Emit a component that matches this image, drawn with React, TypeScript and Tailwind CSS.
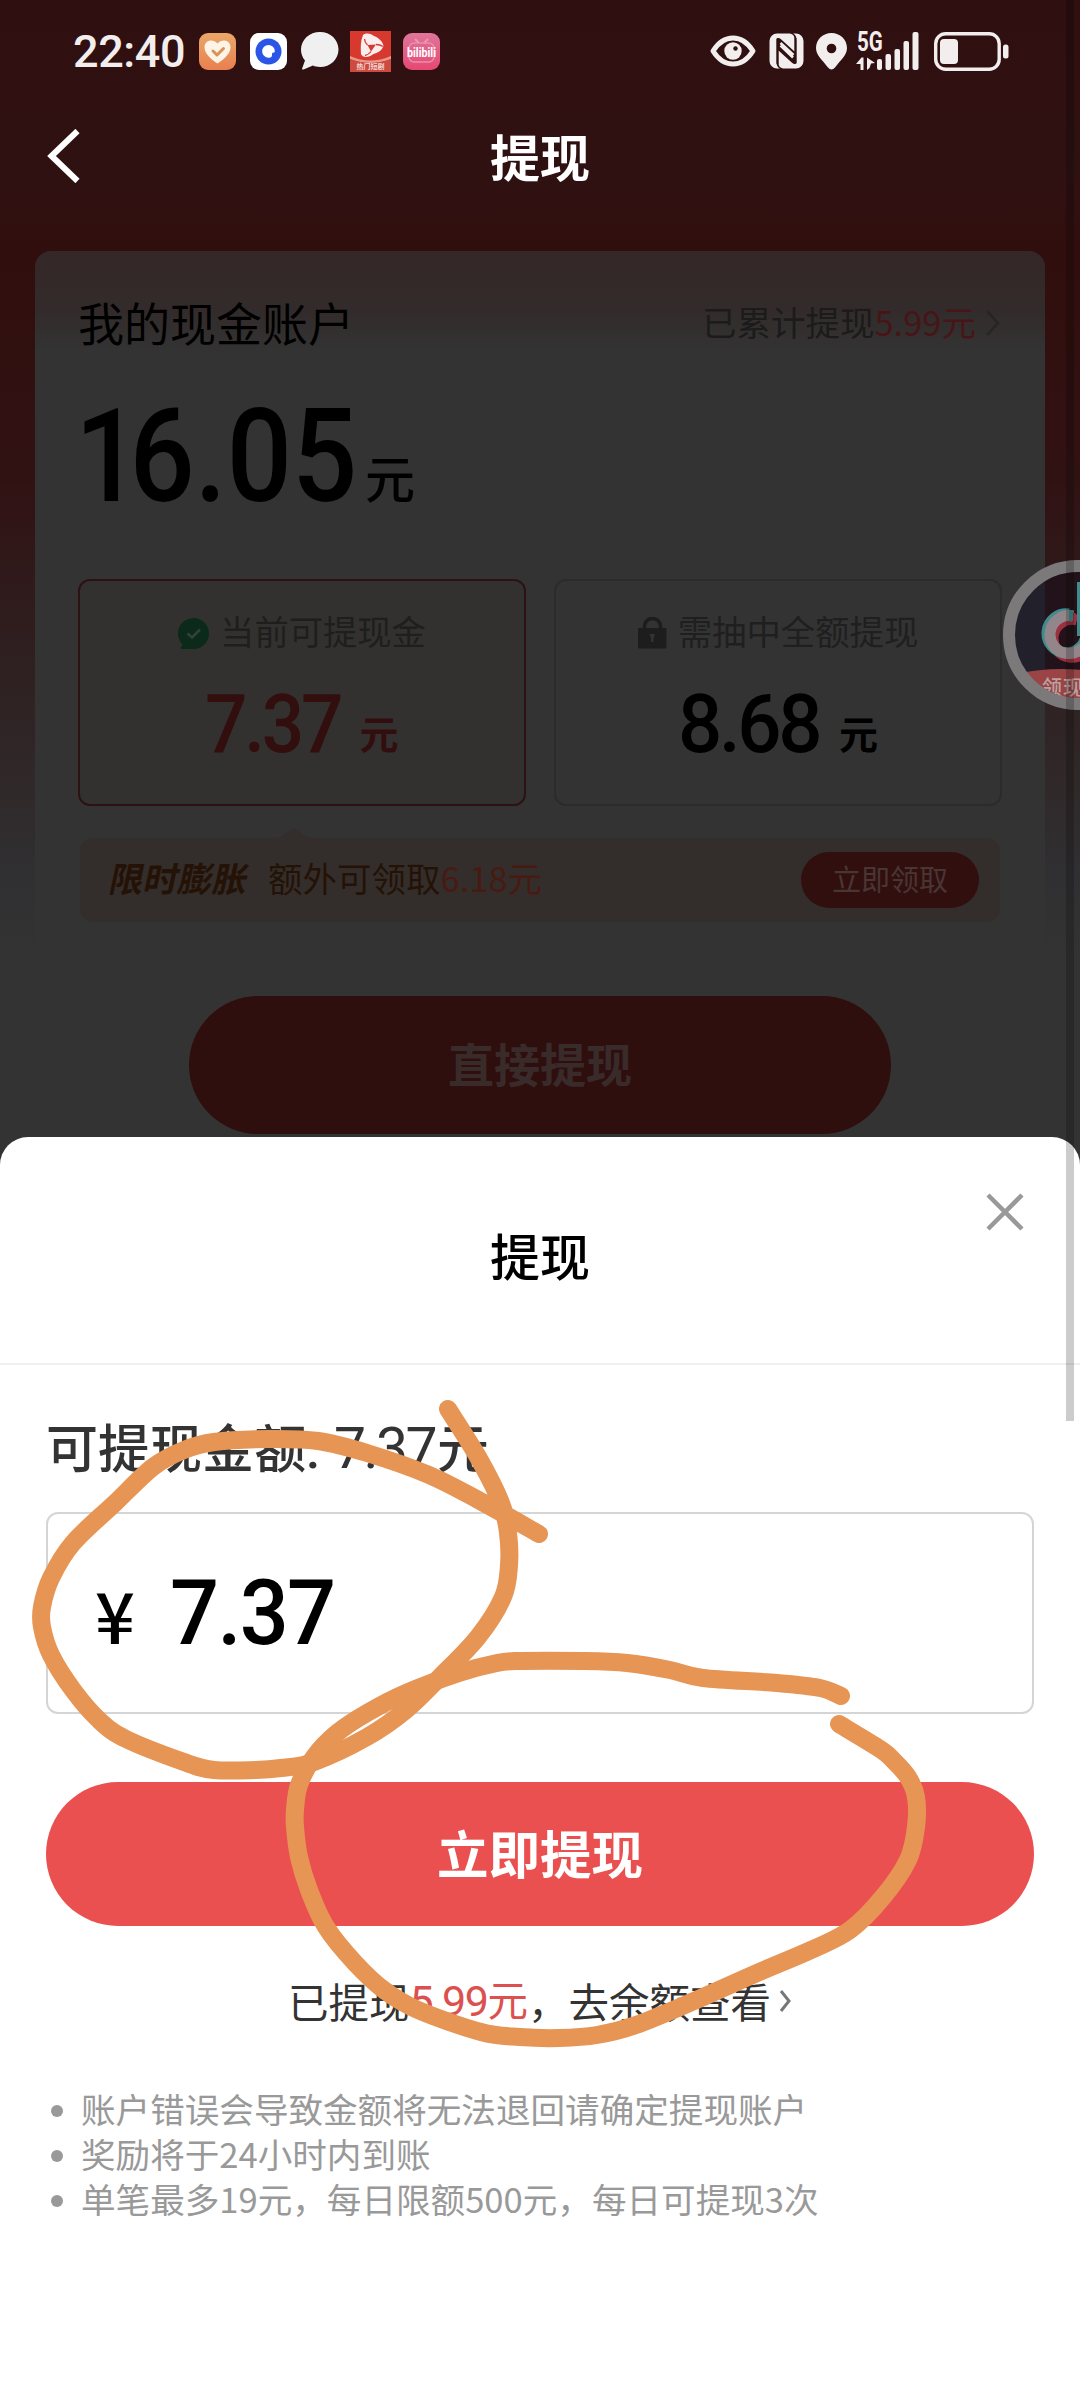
import React from "react";

type Pt = [number, number];

const amountLoop: Pt[] = [
  [448, 1409], [478, 1457], [501, 1503], [508, 1533], [509, 1565], [503, 1597], [478, 1637], [440, 1677],
  [406, 1710], [367, 1737], [314, 1762], [281, 1768], [256, 1770], [214, 1770], [184, 1762], [126, 1739],
  [99, 1720], [73, 1690], [51, 1655], [42, 1627], [42, 1607], [51, 1578], [73, 1543], [115, 1503],
  [153, 1467], [184, 1450], [214, 1442], [268, 1439], [318, 1441], [367, 1453], [429, 1475], [482, 1502], [539, 1534],
];

const buttonLoop: Pt[] = [
  [841, 1696], [820, 1688], [777, 1683], [703, 1678], [670, 1670], [627, 1663], [583, 1661], [520, 1661],
  [497, 1663], [459, 1673], [406, 1693], [367, 1713], [337, 1733], [314, 1757], [299, 1785], [295, 1810],
  [295, 1827], [299, 1857], [309, 1890], [326, 1927], [355, 1963], [384, 1990], [418, 2010], [481, 2032],
  [520, 2037], [559, 2038], [597, 2035], [636, 2025], [694, 2001], [757, 1973], [811, 1950], [850, 1930],
  [883, 1897], [908, 1860], [916, 1827], [916, 1797], [908, 1777], [893, 1760], [880, 1749], [839, 1724],
];

// Catmull-Rom spline through the pen samples
function smooth(p: Pt[]) {
  let d = `M${p[0][0]} ${p[0][1]}`;
  for (let i = 0; i < p.length - 1; i++) {
    const a = p[Math.max(0, i - 1)];
    const b = p[i];
    const c = p[i + 1];
    const e = p[Math.min(p.length - 1, i + 2)];
    d += `C${b[0] + (c[0] - a[0]) / 6} ${b[1] + (c[1] - a[1]) / 6} ${c[0] - (e[0] - b[0]) / 6} ${c[1] - (e[1] - b[1]) / 6} ${c[0]} ${c[1]}`;
  }
  return d;
}

const num = "font-['Roboto','Noto_Sans_CJK_SC',sans-serif] font-medium inline-block origin-left";

function StatusBar() {
  return (
    <div className="flex h-[102px] items-center pl-[73px] pr-[71px] text-[#f3eeee]">
      <span className="w-[126px] font-['Roboto',sans-serif] text-[45px] font-medium leading-none tracking-[-0.4px]">22:40</span>
      <svg className="h-[37px] w-[37px]" viewBox="0 0 37 37">
        <defs>
          <linearGradient id="hb" x1="0" y1="0" x2="0" y2="1">
            <stop offset="0" stopColor="#eaa768" />
            <stop offset="1" stopColor="#e8804f" />
          </linearGradient>
        </defs>
        <rect width="37" height="37" rx="9" fill="url(#hb)" />
        <path d="M18.5 30.500C14 28 5.500 21 5.500 14.500C5.500 7 14 5.500 18.500 10.500C23 5.500 31.500 7 31.500 14.500C31.500 21 23 28 18.500 30.500Z" fill="#fdf3e6" />
        <path d="M14 18l4 4 6.500-6.500" fill="none" stroke="#d99357" strokeWidth="3" strokeLinecap="round" strokeLinejoin="round" />
      </svg>
      <svg className="ml-[14px] h-[37px] w-[37px]" viewBox="0 0 37 37">
        <rect width="37" height="37" rx="9" fill="#fff" />
        <circle cx="18.500" cy="18.500" r="13" fill="#2b55e6" />
        <path d="M18.500 12a6.300 6.300 0 0 1 6.300 6.300c0 2-2.300 .6-2.700 2.400-.3 1.600 .6 4-3.600 4a6.350 6.350 0 0 1 0-12.700z" fill="#fff" />
      </svg>
      <svg className="ml-[13px] h-[38px] w-[39px]" viewBox="0 0 39 38">
        <path d="M20 0C30.500 0 38.500 7.800 38.500 17.500S30.500 35 20 35c-3 0-5-.4-7-1.400L3.500 37.500c-1.300.3-1.800-.6-1.200-1.600L5 28.500C2.500 25.500 1 22 1 17.500 1 7.800 9.500 0 20 0z" fill="#f1f0f0" />
      </svg>
      <svg className="ml-[11px] h-[41px] w-[41px]" viewBox="0 0 41 41">
        <rect width="41" height="41" fill="#d8392f" />
        <path d="M0 25q20 9 41 0v3q-20 8-41 0z" fill="#e8988e" />
        <path d="M0 28q20 8 41 0v13H0z" fill="#cc4a40" />
        <path d="M13 4c4-3 8-1 11 1 5 2 9 6 9.500 10-2 5-6 7-10 8-5 4-11 4-12.500 0-.5-7-.5-13 2-19z" fill="#f9eeee" />
        <path d="M17.500 14l8.500-.5-5 7z" fill="#d8392f" />
        <path d="M17.500 14q-3-3-3-6M26 13.500q4 0 7 2M21 20.500q-2 3-6 4" fill="none" stroke="#d8392f" strokeWidth="1.300" />
        <text x="20.500" y="38" textAnchor="middle" fontSize="7" fontWeight="700" fill="#f3d6d2" fontFamily="Noto Sans CJK SC">热门短剧</text>
      </svg>
      <svg className="ml-[12px] h-[37px] w-[37px]" viewBox="0 0 37 37">
        <defs>
          <linearGradient id="bb" x1="0" y1="0" x2="0" y2="1">
            <stop offset="0" stopColor="#e0759b" />
            <stop offset="1" stopColor="#e54873" />
          </linearGradient>
        </defs>
        <rect width="37" height="37" rx="9" fill="url(#bb)" />
        <path d="M12 6l4 4M25 6l-4 4" stroke="#ea9ab5" strokeWidth="2" />
        <rect x="6" y="10" width="25" height="19" rx="5" fill="none" stroke="#ea8eac" strokeWidth="1.500" />
        <text x="18.500" y="24" textAnchor="middle" fontSize="12" fontWeight="700" textLength="29" lengthAdjust="spacingAndGlyphs" fill="#fff" fontFamily="Roboto">bilibili</text>
      </svg>
      <div className="flex-1" />
      <svg className="h-[32px] w-[46px]" viewBox="0 0 46 32">
        <path d="M3 16C9 6.500 16 3 23 3s14 3.500 20 13C37 25.500 30 29 23 29S9 25.500 3 16z" fill="none" stroke="currentColor" strokeWidth="5" strokeLinejoin="round" />
        <circle cx="23" cy="16" r="8.700" fill="currentColor" />
        <circle cx="25.500" cy="13.500" r="2.200" fill="#2f1010" />
      </svg>
      <svg className="ml-[13px] h-[36px] w-[35px]" viewBox="0 0 35 36">
        <path d="M8 .5H21c3 .5 4.500 2.500 4.500 5.500V18.500L12 6.200C10 4.500 7.500 4.500 7.500 7V29c0 3 1 5.500 3.500 6.500H8A7.500 7.500 0 0 1 .5 28V8A7.500 7.500 0 0 1 8 .5z" fill="currentColor" />
        <path d="M27 35.500H14c-3-.5-4.500-2.500-4.500-5.500V17.500L23 29.800C25 31.500 27.500 31.500 27.500 29V7c0-3-1-5.500-3.500-6.500h3A7.500 7.500 0 0 1 34.500 8v20a7.500 7.500 0 0 1-7.500 7.500z" fill="currentColor" />
        <path d="M8.500 5.500V31M26.500 30.500V5" stroke="#2f1010" strokeWidth="1.800" />
        <path d="M11.500 12.500L24 24.500M11.500 10l13 12" stroke="currentColor" strokeWidth="2.500" />
      </svg>
      <svg className="ml-[12px] h-[37px] w-[31px]" viewBox="0 0 31 37">
        <path d="M15.500 0C24 0 31 6.500 31 15c0 7-6 11.500-12 19.500q-3.500 4-7 0C6 26.500 0 22 0 15 0 6.500 7 0 15.500 0z" fill="currentColor" />
        <circle cx="15.500" cy="15.500" r="4.800" fill="#2f1010" />
      </svg>
      <div className="relative ml-[9px] h-[38px] w-[64px]">
        <span className="absolute left-[1px] top-[-3px] origin-left scale-x-[0.76] font-['Roboto',sans-serif] text-[27px] font-bold leading-[26px]">5G</span>
        <svg className="h-[38px] w-[64px]" viewBox="0 0 64 38">
          <path d="M0 32l5.500-6.500h2V38H4.500V32zM11 25.500l8 5.500-4 .5-1.500 4.500-2.500 2z" fill="currentColor" />
          <rect x="21" y="27" width="5" height="11" rx="2" fill="currentColor" />
          <rect x="29.500" y="22" width="5.500" height="16" rx="2" fill="currentColor" />
          <rect x="38.500" y="17" width="5.500" height="21" rx="2" fill="currentColor" />
          <rect x="47.500" y="9" width="5.500" height="29" rx="2" fill="currentColor" />
          <rect x="56.500" y="0" width="6" height="38" rx="2" fill="currentColor" />
        </svg>
      </div>
      <svg className="ml-[14px] h-[39px] w-[75px]" viewBox="0 0 75 39">
        <rect x="1.700" y="1.700" width="63.500" height="35.600" rx="10" fill="none" stroke="currentColor" strokeWidth="3.400" />
        <rect x="6" y="7" width="18" height="25" rx="4" fill="currentColor" />
        <rect x="69" y="12.500" width="5.500" height="14" rx="2.500" fill="currentColor" />
      </svg>
    </div>
  );
}

function NavBar() {
  return (
    <div className="grid h-[110px] grid-cols-[1fr_auto_1fr] items-center pl-[47px] pr-[47px]">
      <svg className="mb-[2px] h-[54px] w-[34px]" viewBox="0 0 34 54">
        <path d="M30.500 2L4.500 27l26 25" fill="none" stroke="#fff" strokeWidth="6" />
      </svg>
      <h1 className="pb-[5px] text-[50px] font-bold leading-none text-white">提现</h1>
      <span />
    </div>
  );
}

function CashCard() {
  return (
    <section className="mx-[35px] mt-[39px] flex flex-1 flex-col rounded-t-[16px] bg-[linear-gradient(180deg,#342727_0px,#332b2b_60px,#333333_100px)] px-[43px] pt-[42px]">
      <div className="flex h-[60px] items-center justify-between">
        <h2 className="pb-[5px] text-[46px] leading-none text-black">我的现金账户</h2>
        <div className="flex items-center text-[34.500px] leading-none text-[#1b1b1b]">
          <span className="pb-[3px]">已累计提现</span>
          <span className="pb-[3px] text-[#471517]">5.99元</span>
          <svg className="ml-[9px] mr-[1px] h-[28px] w-[16px]" viewBox="0 0 16 28">
            <path d="M2 2l11 12L2 26" fill="none" stroke="#252525" strokeWidth="2.500" />
          </svg>
        </div>
      </div>
      <div className="flex h-[226px] items-baseline pt-[41px] text-black">
        <span className={`${num} w-[287px] translate-x-[-3px] translate-y-[3px] scale-x-[0.89] whitespace-nowrap text-[129px] leading-[120px]`}>
          <span className="tracking-[-12px]">1</span>6.05
        </span>
        <span className="text-[50px] font-medium leading-none">元</span>
      </div>
      <div className="flex h-[227px] justify-between">
        <div className="flex w-[448px] flex-col items-center rounded-[12px] border-2 border-[#2e1112] bg-[#33312f] pt-[32px]">
          <div className="flex h-[40px] items-center text-[34.300px] leading-none text-[#1f1e1d]">
            <svg className="mr-[11px] h-[31px] w-[31px]" viewBox="0 0 31 31">
              <path d="M15.500 0a15.500 15.500 0 1 1 0 31H4c-1.500 0-1.500-1.500-.5-2.500l1-2A15.500 15.500 0 0 1 15.500 0z" fill="#0c2a1a" />
              <path d="M9.500 15.500l4.500 4 8-8" fill="none" stroke="#33403a" strokeWidth="2.500" />
            </svg>
            <span className="pb-[5px]">当前可提现金</span>
          </div>
          <div className="flex items-baseline pt-[18px] text-[#320e0e]">
            <span className={`${num} w-[154px] translate-y-[3px] scale-x-[0.91] text-[82px] leading-[100px] tracking-[-3.500px]`}>7.37</span>
            <span className="text-[39px] font-bold leading-none">元</span>
          </div>
        </div>
        <div className="flex w-[448px] flex-col items-center rounded-[12px] border-2 border-[#2b2b2b] pt-[32px]">
          <div className="flex h-[40px] items-center text-[34.400px] leading-none text-[#1f1f1f]">
            <svg className="mr-[11px] h-[32px] w-[29px]" viewBox="0 0 29 32">
              <path d="M6.500 12V9.500a8 8 0 0 1 16 0V12" fill="none" stroke="#1d1d1d" strokeWidth="3.500" />
              <rect x="0" y="11" width="28.500" height="20.500" rx="1" fill="#1d1d1d" />
              <path d="M11.500 17h5.500l-1.500 4v4h-2.500v-4z" fill="#333" />
            </svg>
            <span className="pb-[5px]">需抽中全额提现</span>
          </div>
          <div className="flex items-baseline pt-[18px] text-black">
            <span className={`${num} w-[161px] translate-y-[3px] scale-x-[0.95] text-[82px] leading-[100px] tracking-[-3.500px]`}>8.68</span>
            <span className="text-[39px] font-bold leading-none">元</span>
          </div>
        </div>
      </div>
      <div className="relative mx-[2px] mt-[32px] flex h-[84px] items-center rounded-[14px] bg-[#332e2b] pl-[30px] pr-[21px] text-[34.500px] leading-none text-[#251206]">
        <svg className="absolute left-[196px] top-[-9px] h-[9px] w-[36px]" viewBox="0 0 36 9">
          <path d="M0 9C9 8 12 0 18 0s9 8 18 9z" fill="#332e2b" />
        </svg>
        <span className="-skew-x-12 pb-[5px] font-bold">限时膨胀</span>
        <span className="ml-[20px] pb-[5px]">额外可领取</span>
        <span className="pb-[5px] text-[#481a12]">6.18元</span>
        <button className="ml-auto flex h-[56px] w-[178px] items-center justify-center rounded-full bg-[#310f0f] pb-[3px] text-[29px] leading-none text-[#4a3535]">立即领取</button>
      </div>
      <button className="mx-auto mt-[74px] flex h-[138px] w-[702px] items-center justify-center rounded-full bg-[#2f0f0e] pb-[6px] text-[46px] font-bold leading-none text-[#3a2b2b]">直接提现</button>
    </section>
  );
}

function FloatingBubble() {
  return (
    <svg className="absolute left-[1003px] top-[560px] h-[150px] w-[77px]" viewBox="0 0 77 150">
      <defs>
        <clipPath id="disc"><circle cx="75" cy="75" r="64" /></clipPath>
      </defs>
      <g clipPath="url(#disc)">
        <rect width="77" height="150" fill="#22212b" />
        <rect x="42" y="0" width="35" height="150" fill="#22131a" />
        <g fill="none" strokeWidth="11">
          <path d="M72 57A19 19 0 1 0 86 76" stroke="#9c3040" transform="translate(2 3)" />
          <path d="M67 54A19.500 19.500 0 1 0 84 74" stroke="#3f8b8d" transform="translate(-1 0)" />
          <path d="M70 56A19 19 0 1 0 85 75" stroke="#93868a" />
        </g>
        <rect x="66" y="50" width="4" height="11" fill="#3f8b8d" />
        <rect x="70" y="53" width="2.500" height="11" fill="#9c3040" />
        <rect x="74" y="22" width="3" height="54" fill="#3f8b8d" />
        <path d="M0 117Q40 106 80 110v41H0z" fill="#9a4446" />
        <text x="39" y="135" fontSize="20" fontWeight="500" letterSpacing="1" fill="#b9a3a0" fontFamily="Noto Sans CJK SC">领现</text>
      </g>
      <circle cx="75" cy="75" r="69" fill="none" stroke="#7c797a" strokeWidth="12" />
    </svg>
  );
}

const notes = [
  "账户错误会导致金额将无法退回请确定提现账户",
  "奖励将于24小时内到账",
  "单笔最多19元，每日限额500元，每日可提现3次",
];

function WithdrawSheet() {
  return (
    <section className="absolute inset-x-0 bottom-0 flex h-[1263px] flex-col rounded-t-[28px] bg-white">
      <header className="relative flex h-[228px] items-center justify-center border-b-2 border-[#efefef] pt-[7px]">
        <h2 className="text-[50px] font-medium leading-none text-black">提现</h2>
        <svg className="absolute right-[56px] top-[56px] h-[38px] w-[38px]" viewBox="0 0 38 38">
          <path d="M2 2l34 34M36 2L2 36" stroke="#999" strokeWidth="4.500" />
        </svg>
      </header>
      <div className="flex flex-col px-[46px]">
        <p className="mt-[46px] flex h-[70px] items-baseline text-[52px] font-medium leading-[70px] text-[#333]">
          <span>可提现金额</span>
          <span className="w-[28px] font-['Roboto',sans-serif]">:</span>
          <span className="w-[103px] font-['Roboto',sans-serif] text-[57px] font-normal tracking-[-2.500px]">7.37</span>
          <span>元</span>
        </p>
        <div className="mt-[31px] flex h-[202px] items-baseline rounded-[12px] border-2 border-[#d5d5d5] pl-[47px] pt-[40px] text-black">
          <span className="w-[75px] font-['Noto_Sans_CJK_SC',sans-serif] text-[70px] font-medium leading-[80px]">¥</span>
          <span className={`${num} scale-x-[0.96] text-[90px] leading-[120px] tracking-[-1.800px]`}>7.37</span>
        </div>
        <button className="mt-[68px] flex h-[144px] items-center justify-center rounded-full bg-[#ea504f] pb-[4px] text-[51.500px] font-bold leading-none text-white">立即提现</button>
        <p className="mt-[45px] flex h-[60px] items-center justify-center text-[40.500px] leading-none text-[#333]">
          <span>已提现</span>
          <span className="flex items-baseline text-[#dc5050]">
            <span className="font-['Roboto',sans-serif] text-[43px] tracking-[-1.500px]">5.99</span>元
          </span>
          <span>，去余额查看</span>
          <svg className="ml-[8px] h-[24px] w-[13px]" viewBox="0 0 13 24">
            <path d="M2 2l8 10-8 10" fill="none" stroke="#777" strokeWidth="3" />
          </svg>
        </p>
        <ul className="mt-[57px] flex flex-col pl-[5px] text-[34.600px] leading-[45px] text-[#999]">
          {notes.map((n) => (
            <li key={n} className="flex h-[45px] items-center gap-[18px]">
              <span className="h-[12px] w-[12px] rounded-full bg-[#999]" />
              <span className="whitespace-nowrap pb-[4px]">{n}</span>
            </li>
          ))}
        </ul>
      </div>
    </section>
  );
}

export default function App() {
  return (
    <main className="relative flex h-[2400px] w-[1080px] flex-col overflow-hidden bg-[#333] bg-[linear-gradient(180deg,#2f0f0f_0px,#301112_180px,#310e0e_250px,#311213_480px,#2f1f20_650px,#302829_780px,#303032_880px,#333333_960px)] font-['Noto_Sans_CJK_SC',sans-serif]">
      <StatusBar />
      <NavBar />
      <CashCard />
      <FloatingBubble />
      <WithdrawSheet />
      <div className="absolute left-[1066px] top-0 h-[1421px] w-[8px] bg-black/20" />
      <svg className="pointer-events-none absolute inset-0 h-[2400px] w-[1080px]" viewBox="0 0 1080 2400" fill="none" stroke="#e69555" strokeWidth="18" strokeLinecap="round" strokeLinejoin="round">
        <path d={smooth(amountLoop)} />
        <path d={smooth(buttonLoop)} />
      </svg>
    </main>
  );
}
